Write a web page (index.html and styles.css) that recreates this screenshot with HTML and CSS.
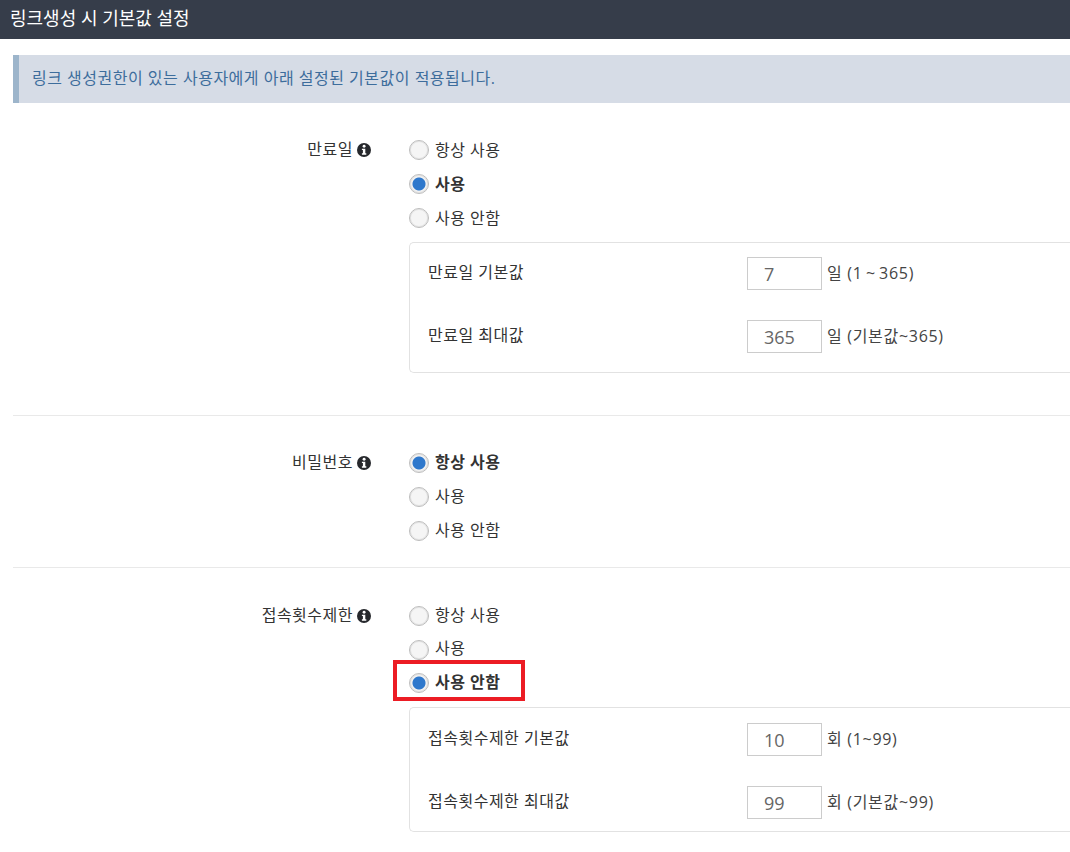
FILE: index.html
```html
<!DOCTYPE html>
<html lang="ko">
<head>
<meta charset="utf-8">
<title>링크생성 시 기본값 설정</title>
<link rel="stylesheet" href="styles.css">
</head>
<body>
<svg class="sprite" width="0" height="0" aria-hidden="true">
  <symbol id="info" viewBox="0 0 14 14">
    <circle cx="7" cy="7" r="7" fill="#26282c"/>
    <circle cx="7.1" cy="3.3" r="1.45" fill="#fff"/>
    <path d="M4.9 5.7h3.4v4.6h1v1.4H4.9v-1.4h1V7.1h-1z" fill="#fff"/>
  </symbol>
</svg>
<header class="title-bar">링크생성 시 기본값 설정</header>
<main class="content">
  <div class="notice">링크 생성권한이 있는 사용자에게 아래 설정된 기본값이 적용됩니다.</div>

  <section class="setting setting-first">
    <div class="setting-label">만료일 <svg class="info"><use href="#info"/></svg></div>
    <div class="setting-body">
      <div class="radio-row"><span class="radio"></span>항상 사용</div>
      <div class="radio-row checked"><span class="radio"></span>사용</div>
      <div class="radio-row"><span class="radio"></span>사용 안함</div>
      <div class="sub-box">
        <div class="sub-row"><span class="sub-label">만료일 기본값</span><span class="field">7</span><span class="hint">일 (1&#8201;~&#8201;365)</span></div>
        <div class="sub-row"><span class="sub-label">만료일 최대값</span><span class="field">365</span><span class="hint">일 (기본값~365)</span></div>
      </div>
    </div>
  </section>

  <section class="setting setting-second">
    <div class="setting-label">비밀번호 <svg class="info"><use href="#info"/></svg></div>
    <div class="setting-body">
      <div class="radio-row checked"><span class="radio"></span>항상 사용</div>
      <div class="radio-row"><span class="radio"></span>사용</div>
      <div class="radio-row"><span class="radio"></span>사용 안함</div>
    </div>
  </section>

  <section class="setting setting-third">
    <div class="setting-label">접속횟수제한 <svg class="info"><use href="#info"/></svg></div>
    <div class="setting-body">
      <div class="radio-row"><span class="radio"></span>항상 사용</div>
      <div class="radio-row"><span class="radio"></span>사용</div>
      <div class="radio-row checked annotated"><span class="radio"></span>사용 안함</div>
      <div class="sub-box">
        <div class="sub-row"><span class="sub-label">접속횟수제한 기본값</span><span class="field">10</span><span class="hint">회 (1~99)</span></div>
        <div class="sub-row"><span class="sub-label">접속횟수제한 최대값</span><span class="field">99</span><span class="hint">회 (기본값~99)</span></div>
      </div>
    </div>
  </section>
</main>
</body>
</html>
```
FILE: styles.css
```css
* { box-sizing: border-box; }
html, body { margin: 0; height: 852px; overflow: hidden; background: #fff; }
body {
  font-family: "Open Sans", "Noto Sans CJK KR", sans-serif;
  font-size: 16px;
  letter-spacing: 0.5px;
  color: #333;
}
.sprite { position: absolute; }
.title-bar {
  height: 39px;
  background: #363d4a;
  color: #fff;
  font-size: 18px;
  letter-spacing: 0;
  line-height: 36px;
  padding-left: 10px;
}
.content { padding: 16px 0 0 13px; }
.notice {
  height: 48px;
  line-height: 47px;
  padding-left: 13px;
  background: #d6dce6;
  border-left: 6px solid #9db5cb;
  color: #3d6d9c;
}
.setting { display: flex; border-bottom: 1px solid #e9e9e9; }
.setting-third { border-bottom: 0; }
.setting-first { padding-top: 29px; height: 313px; }
.setting-second { padding-top: 29px; height: 152px; }
.setting-third { padding-top: 30px; }
.setting-label {
  flex: 0 0 358px;
  display: flex;
  justify-content: flex-end;
  gap: 4px;
  height: 34px;
  line-height: 34px;
}
.info { width: 14px; height: 14px; margin-top: 11px; }
.setting-body { margin-left: 38px; flex: 1; }
.radio-row {
  display: flex;
  align-items: center;
  height: 34px;
  padding-bottom: 1px;
  position: relative;
}
.setting-second .radio-row,
.setting-third .radio-row { padding-bottom: 3px; }
.setting-third .radio-row:nth-child(2) { height: 33px; }
.radio {
  width: 20px;
  height: 20px;
  margin-top: 3px;
  margin-right: 6px;
  border-radius: 50%;
  border: 1px solid #bdbdbd;
  background: #f5f5f5;
  box-shadow: inset 0 0 0 1px #e2e2e2;
}
.setting-second .radio,
.setting-third .radio { margin-top: 5px; }
.checked { font-weight: 700; }
.checked .radio {
  background: radial-gradient(circle, #2e78cc 0 6px, #f2f2f2 7px);
}
.annotated::after {
  content: "";
  box-sizing: border-box;
  position: absolute;
  left: -16px;
  top: -5px;
  width: 132px;
  height: 41px;
  border: 4px solid #ec1c24;
}
.sub-box {
  margin-top: 8px;
  border: 1px solid #e2e2e2;
  border-right: 0;
  border-radius: 5px 0 0 5px;
  padding: 6px 0 0 18px;
  height: 131px;
}
.setting-third .sub-box { height: 125px; padding-top: 7px; }
.sub-row {
  display: flex;
  align-items: center;
  height: 48px;
}
.sub-row + .sub-row { margin-top: 15px; }
.sub-label { width: 319px; padding-bottom: 4px; }
.hint { padding-bottom: 2px; letter-spacing: 0.7px; color: #444; }
.field {
  width: 75px;
  height: 33px;
  line-height: 32px;
  padding-left: 16px;
  margin-right: 5px;
  border: 1px solid #ccc;
  font-size: 18px;
  letter-spacing: 0;
  color: #666;
}
```
